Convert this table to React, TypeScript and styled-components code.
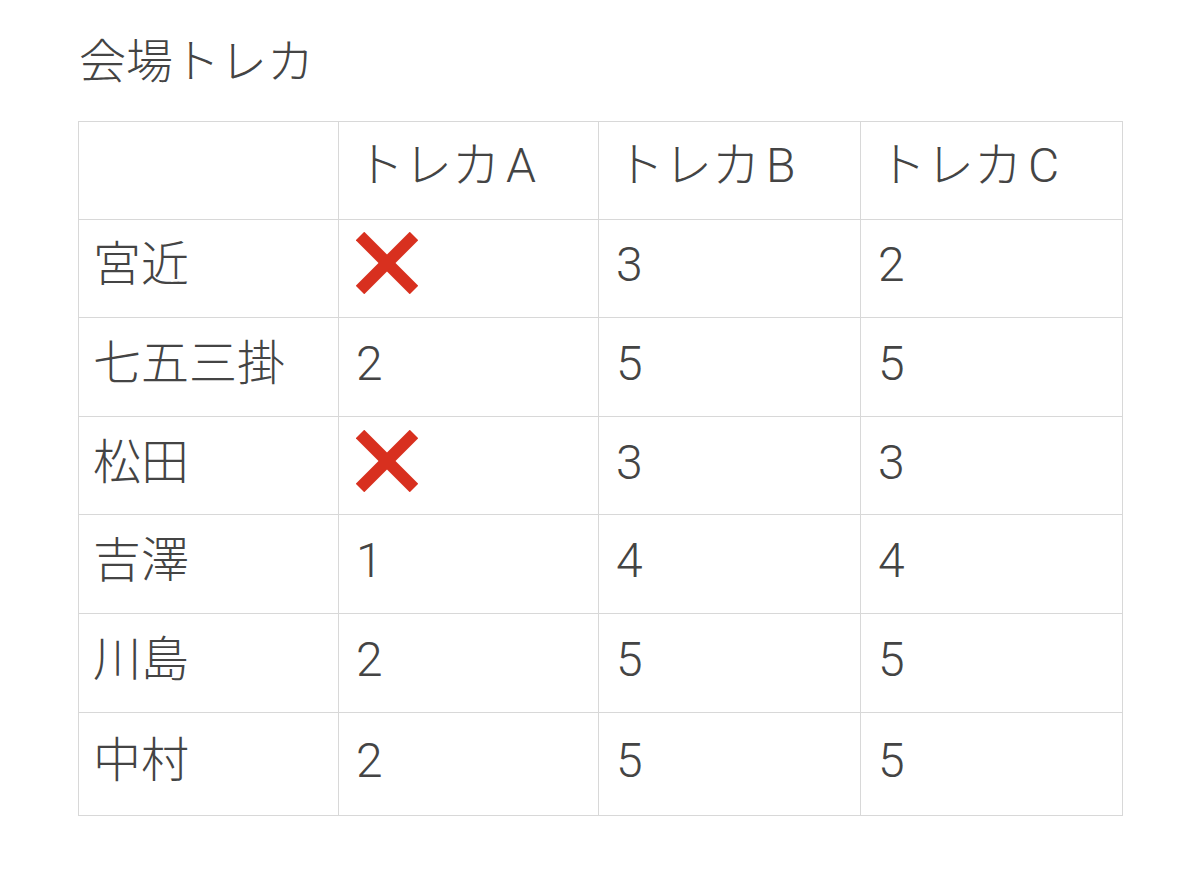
import styled, { createGlobalStyle } from "styled-components"

const GlobalStyle = createGlobalStyle`
  html, body {
    margin: 0;
    padding: 0;
    background: #ffffff;
  }
  body {
    font-family: Roboto, "Noto Sans CJK JP", sans-serif;
    color: #444444;
  }
`

const Page = styled.div`
  padding: 27px 0 0 78px;
`

const Title = styled.h1`
  margin: 0 0 24px 1px;
  font-size: 47px;
  font-weight: 300;
  line-height: 70px;
  color: #444444;
`

const Table = styled.table`
  border-collapse: collapse;
  table-layout: fixed;
  width: 1044px;
  border: 1px solid #d8d8d8;
`

const Cell = styled.td<{ $width?: number; $pad?: number }>`
  width: ${(p) => (p.$width ? `${p.$width}px` : "auto")};
  height: 98.6px;
  padding: 0 0 6px ${(p) => p.$pad ?? 17}px;
  border: 1px solid #d8d8d8;
  font-size: 48px;
  font-weight: 300;
  line-height: 1;
  vertical-align: middle;
  text-align: left;
  color: #444444;
  box-sizing: border-box;

  tbody tr:last-child > & {
    height: 103px;
  }
`

const HeadCell = styled(Cell).attrs({ as: "th" })`
  height: 97.6px;
  padding-bottom: 8px;
`

const Letter = styled.span`
  margin-left: 6px;
`

const CrossMark = () => (
  <svg width="62" height="62" viewBox="0 0 62 62" style={{ display: "block", marginTop: -4 }}>
    <g stroke="#d8301f" strokeWidth="12" strokeLinecap="butt">
      <line x1="4" y1="4" x2="58" y2="58" />
      <line x1="58" y1="4" x2="4" y2="58" />
    </g>
  </svg>
)

type Value = number | "x"

const rows: { name: string; values: Value[] }[] = [
  { name: "宮近", values: ["x", 3, 2] },
  { name: "七五三掛", values: [2, 5, 5] },
  { name: "松田", values: ["x", 3, 3] },
  { name: "吉澤", values: [1, 4, 4] },
  { name: "川島", values: [2, 5, 5] },
  { name: "中村", values: [2, 5, 5] },
]

const columns = ["A", "B", "C"]
const widths = [260, 260, 262, 262]

export default function App() {
  return (
    <>
      <GlobalStyle />
      <Page>
        <Title>会場トレカ</Title>
        <Table>
          <thead>
            <tr>
              <HeadCell $width={widths[0]} />
              {columns.map((c, i) => (
                <HeadCell key={c} $width={widths[i + 1]}>
                  トレカ<Letter>{c}</Letter>
                </HeadCell>
              ))}
            </tr>
          </thead>
          <tbody>
            {rows.map((r) => (
              <tr key={r.name}>
                <Cell $pad={14}>{r.name}</Cell>
                {r.values.map((v, i) => (
                  <Cell key={i}>{v === "x" ? <CrossMark /> : v}</Cell>
                ))}
              </tr>
            ))}
          </tbody>
        </Table>
      </Page>
    </>
  )
}
